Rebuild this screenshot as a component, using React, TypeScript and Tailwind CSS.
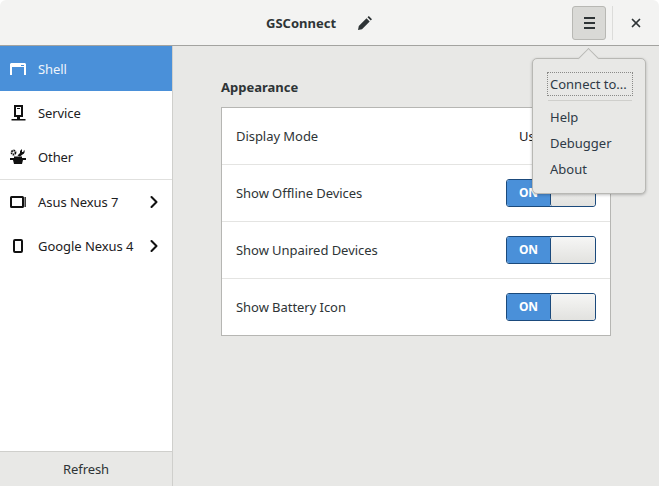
import { ChevronRight, X } from 'lucide-react'

const FONT = "font-['Noto_Sans',sans-serif]"

function ShellIcon() {
  return (
    <svg width="16" height="12" viewBox="0 0 16 12" fill="none">
      <path d="M1 0h14l1 1v11h-2V4H2v8H0V1z" fill="#fff" />
      <rect x="11" y="2" width="3" height="1" fill="#4a90d9" />
    </svg>
  )
}

function ServiceIcon() {
  return (
    <svg width="15" height="16" viewBox="0 0 15 16" fill="none">
      <path d="M3 0h9v12H9v2H6v-2H3zM5 2v8h5V2z" fill="#111" fillRule="evenodd" />
      <rect x="6" y="3" width="3" height="1" fill="#111" />
      <rect x="0.500" y="14" width="14" height="1.500" fill="#111" />
    </svg>
  )
}

function OtherIcon() {
  return (
    <svg width="16" height="16" viewBox="0 0 16 16" fill="#111">
      <path d="M0 9h4V7.500h8V9h4v2h-3l-1 4H4l-1-4H0z" />
      <circle cx="3.500" cy="3.500" r="2" fill="none" stroke="#111" strokeWidth="1.800" strokeDasharray="1.500 .6" />
      <path d="M7.500 6.500l2.500-2.500V2l2-2v3h1.200l1-2.200c1 1.800.4 4-1.700 4.600l-2.500 2.100z" />
    </svg>
  )
}

function TabletIcon() {
  return (
    <svg width="16" height="12" viewBox="0 0 16 12" fill="none">
      <rect x="1" y="1" width="12" height="10" stroke="#111" strokeWidth="2" rx="0.500" />
      <rect x="14.500" y="1" width="1.300" height="10" fill="#111" />
    </svg>
  )
}

function PhoneIcon() {
  return (
    <svg width="10" height="14" viewBox="0 0 10 14" fill="none">
      <rect x="1" y="1" width="8" height="12" stroke="#111" strokeWidth="2" rx="1" />
    </svg>
  )
}

function PencilIcon() {
  return (
    <svg width="14" height="14" viewBox="0 0 14 14" fill="#2e3436">
      <path d="M0 14l.8-4L8.500 2.300l3.200 3.200L4 13.200zM9.500 1.300L10.800 0 14 3.200l-1.300 1.300z" />
    </svg>
  )
}

const PAGES = [
  { label: 'Shell', icon: <ShellIcon />, active: true, height: 'h-[45px]' },
  { label: 'Service', icon: <ServiceIcon />, height: 'h-[44px]' },
  { label: 'Other', icon: <OtherIcon />, height: 'h-[44px]' },
]

const DEVICES = [
  { label: 'Asus Nexus 7', icon: <TabletIcon /> },
  { label: 'Google Nexus 4', icon: <PhoneIcon /> },
]

function Switch() {
  return (
    <div className="flex w-[90px] h-[28px] rounded-[3px] border border-[#1b4a7c] overflow-hidden">
      <div className="w-[43px] bg-[#4a90d9] flex items-center justify-center text-white text-[12px] font-bold">ON</div>
      <div className="flex-1 border-l border-[#1b4a7c] rounded-[2px] bg-gradient-to-b from-[#f6f6f5] to-[#e2e2df]" />
    </div>
  )
}

function SettingRow({ label, last, children }: { label: string; last?: boolean; children: React.ReactNode }) {
  return (
    <div className={`flex items-center justify-between px-[14px] ${last ? 'h-[56px]' : 'h-[57px] border-b border-[#e4e4e2]'}`}>
      <span className="pt-px text-[13px] tracking-[-0.05px] text-[#2e3436]">{label}</span>
      {children}
    </div>
  )
}

export default function App() {
  return (
    <div className={`relative w-[659px] h-[486px] overflow-hidden bg-white ${FONT}`}>
      {/* Header */}
      <header className="h-[46px] bg-[#f3f3f2] border-b border-[#a3a3a0] rounded-t-[6px] flex items-center pl-[266px]">
        <span className="pt-[2px] text-[13px] font-bold text-[#2e3436]">GSConnect</span>
        <span className="ml-[22px] pt-px"><PencilIcon /></span>
        <div className="ml-auto w-[34px] h-[34px] rounded-[3px] border border-[#b8b8b4] bg-[#d9d9d6] flex items-center justify-center">
          <div className="w-[11px] flex flex-col gap-[3px]">
            <div className="h-[2px] bg-[#2e3436]" />
            <div className="h-[2px] bg-[#2e3436]" />
            <div className="h-[2px] bg-[#2e3436]" />
          </div>
        </div>
        <div className="w-px h-[34px] bg-[#dcdcda] ml-[6px]" />
        <div className="w-[46px] flex items-center justify-center">
          <X size={14} strokeWidth={3} className="text-[#2e3436]" />
        </div>
      </header>

      <div className="flex h-[440px]">
        {/* Sidebar */}
        <aside className="w-[173px] flex-shrink-0 border-r border-[#cfcfcc] flex flex-col bg-white">
          {PAGES.map((p) => (
            <div
              key={p.label}
              className={`${p.height} flex items-center pl-[10px] ${p.active ? 'bg-[#4a90d9] text-[#eef4fb]' : 'text-[#1c2022]'}`}
            >
              <span className="w-[16px] flex justify-center">{p.icon}</span>
              <span className="ml-[12px] pt-[2px] text-[13px] tracking-[-0.1px]">{p.label}</span>
            </div>
          ))}
          <div className="h-px bg-[#e0e0de]" />
          {DEVICES.map((d) => (
            <div key={d.label} className="h-[44px] flex items-center pl-[10px] pr-[8px] text-[#1c2022]">
              <span className="w-[16px] flex justify-center">{d.icon}</span>
              <span className="ml-[12px] pt-[2px] text-[13px] tracking-[-0.05px]">{d.label}</span>
              <ChevronRight size={20} strokeWidth={2.500} className="ml-auto text-[#111]" />
            </div>
          ))}
          <div className="flex-1" />
          <div className="h-[35px] pt-px border-t border-[#cfcfcc] bg-[#e8e8e6] flex items-center justify-center text-[13px] tracking-[-0.1px] text-[#2e3436]">
            Refresh
          </div>
        </aside>

        {/* Content */}
        <main className="flex-1 bg-[#e8e8e6] pl-[48px] pt-[32px]">
          <h2 className="text-[13px] font-bold text-[#2e3436] leading-[18px] mb-[11px]">Appearance</h2>
          <div className="w-[390px] bg-white border border-[#b6b6b3]">
            <SettingRow label="Display Mode">
              <span className="w-[77px] pt-px text-[13px] text-[#1c2022]">Us</span>
            </SettingRow>
            <SettingRow label="Show Offline Devices"><Switch /></SettingRow>
            <SettingRow label="Show Unpaired Devices"><Switch /></SettingRow>
            <SettingRow label="Show Battery Icon" last><Switch /></SettingRow>
          </div>
        </main>
      </div>

      {/* Popover menu */}
      <div className="absolute left-[532px] top-[58px] w-[114px] h-[136px] bg-[#e8e8e6] border border-[#b8b8b4] rounded-[5px] shadow-[0_1px_3px_rgba(0,0,0,0.25)] pl-[14px] pr-[12px] pt-[13px] text-[13px] text-[#2e3a46]">
        <div className="absolute left-[48px] -top-[8.500px] w-[15px] h-[15px] rotate-45 bg-[#e8e8e6] border-l border-t border-[#b8b8b4]" />
        <div className="relative h-[24px] w-[86px] pt-px border border-dotted border-[#8a8a88] flex items-center pl-[2px]">Connect to...</div>
        <div className="h-px bg-[#cfcfcc] mt-[4px] mx-[1px] mb-[6px]" />
        <div className="flex flex-col pl-[3px]">
          <span className="h-[26px] leading-[20px]">Help</span>
          <span className="h-[26px] leading-[20px]">Debugger</span>
          <span className="h-[26px] leading-[20px]">About</span>
        </div>
      </div>
    </div>
  )
}
